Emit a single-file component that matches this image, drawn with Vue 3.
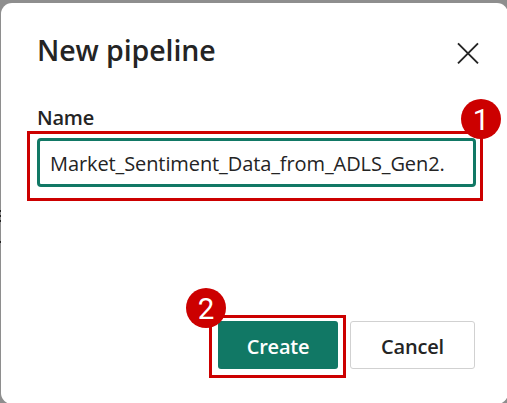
<script setup>
import { ref } from 'vue'

const name = ref('Market_Sentiment_Data_from_ADLS_Gen2.')
</script>

<template>
  <div class="backdrop">
    <div class="behind"><i></i><i></i><i></i><i></i></div>
    <section class="dialog" role="dialog">
      <header class="header">
        <h1 class="title">New pipeline</h1>
        <svg class="close" viewBox="0 0 22 22" width="22" height="22">
          <path d="M1 1.3L21 21.3M21 1.3L1 21.3" fill="none" stroke="#242424" stroke-width="1.9" />
        </svg>
      </header>
      <div class="label"><span>Name</span></div>
      <div class="field">
        <div class="input"><span>{{ name }}</span></div>
        <div class="mark"><b class="badge">1</b></div>
      </div>
      <footer class="actions">
        <div class="primary">
          <div class="button create"><span>Create</span></div>
          <div class="mark"><b class="badge">2</b></div>
        </div>
        <div class="button cancel"><span>Cancel</span></div>
      </footer>
    </section>
  </div>
</template>

<style>
body {
  margin: 0;
  overflow: hidden;
}
</style>

<style scoped>
* {
  box-sizing: border-box;
}
.backdrop {
  position: relative;
  width: 507px;
  height: 403px;
  padding: 3px 0 0 1px;
  overflow: hidden;
  background: #8e8e8e;
  font-family: "Open Sans", "Noto Sans", sans-serif;
  color: #242424;
}
.behind {
  position: absolute;
  left: 0;
  top: 210px;
  width: 1px;
  display: flex;
  flex-direction: column;
  gap: 3px;
}
.behind i {
  height: 2px;
  background: #222;
}
.behind i:last-child {
  margin-top: 16px;
}
.dialog {
  width: 507px;
  height: 401px;
  padding: 28px 33px 0 36px;
  border-radius: 11px;
  background: #fff;
}
.header {
  display: flex;
  justify-content: space-between;
  height: 71px;
}
.title {
  margin: 0;
  font-size: 28.5px;
  line-height: 38px;
  font-weight: 560;
  letter-spacing: -0.08px;
  white-space: nowrap;
}
.close {
  margin: 11px -4px 0 0;
}
.label {
  height: 36px;
  font-size: 20px;
  line-height: 32px;
  font-weight: 570;
  letter-spacing: -0.2px;
}
.field {
  position: relative;
  width: 439px;
}
.input {
  height: 49px;
  padding-left: 10px;
  border: 3px solid #117865;
  border-radius: 4px;
  font-size: 20px;
  line-height: 45px;
  letter-spacing: -0.1px;
  white-space: nowrap;
}
.mark {
  position: absolute;
  border: 3px solid #c00;
}
.field .mark {
  left: -10px;
  top: -7px;
  width: 456px;
  height: 70px;
}
.badge {
  position: absolute;
  width: 40px;
  height: 40px;
  border-radius: 50%;
  background: #c00;
  color: #fff;
  font: 400 29.5px/42px Roboto, "Liberation Sans", sans-serif;
  text-align: center;
}
.field .badge {
  right: -21px;
  top: -35px;
}
.actions {
  display: flex;
  justify-content: flex-end;
  gap: 12px;
  margin-top: 134px;
}
.primary {
  position: relative;
}
.primary .mark {
  left: -9px;
  top: -6px;
  width: 137px;
  height: 63px;
}
.primary .badge {
  left: -26px;
  top: -30px;
}
.button {
  height: 48px;
  border-radius: 3px;
  font-size: 20px;
  line-height: 51px;
  font-weight: 570;
  letter-spacing: -0.2px;
  text-align: center;
}
.create {
  width: 120px;
  background: #117865;
  color: #fff;
  font-weight: 600;
}
.cancel {
  width: 125px;
  border: 1px solid #d1d1d1;
  line-height: 49px;
}
</style>
